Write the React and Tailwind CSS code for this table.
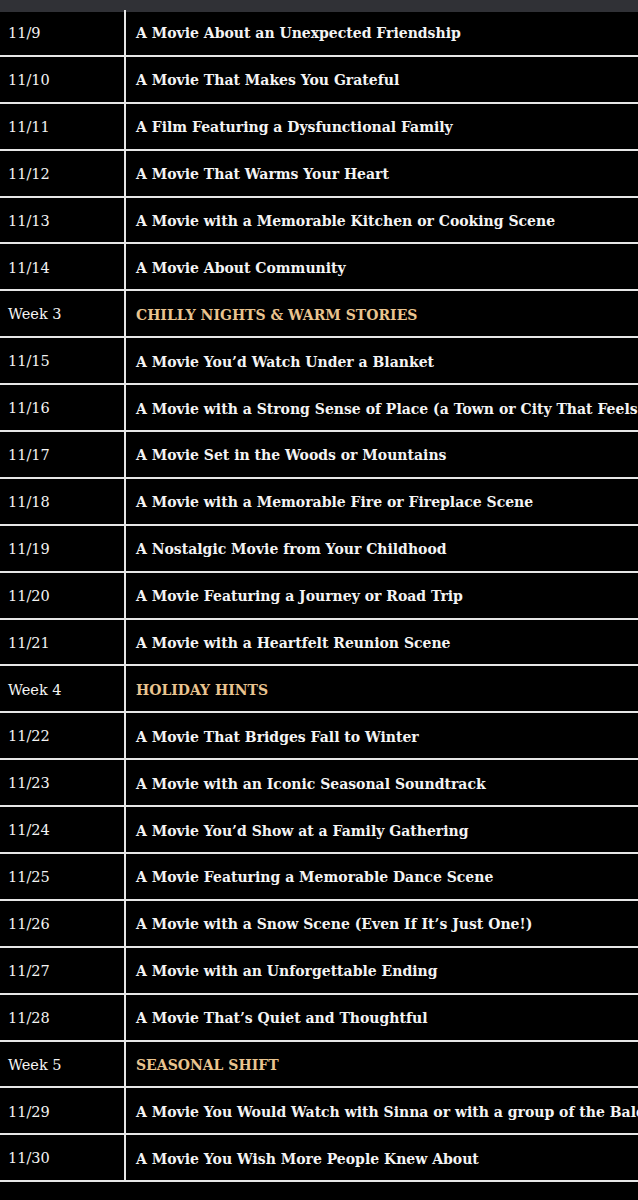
const rows = [
  ['11/9', 'A Movie About an Unexpected Friendship'],
  ['11/10', 'A Movie That Makes You Grateful'],
  ['11/11', 'A Film Featuring a Dysfunctional Family'],
  ['11/12', 'A Movie That Warms Your Heart'],
  ['11/13', 'A Movie with a Memorable Kitchen or Cooking Scene'],
  ['11/14', 'A Movie About Community'],
  ['Week 3', 'CHILLY NIGHTS & WARM STORIES', true],
  ['11/15', 'A Movie You’d Watch Under a Blanket'],
  ['11/16', 'A Movie with a Strong Sense of Place (a Town or City That Feels Like Home)'],
  ['11/17', 'A Movie Set in the Woods or Mountains'],
  ['11/18', 'A Movie with a Memorable Fire or Fireplace Scene'],
  ['11/19', 'A Nostalgic Movie from Your Childhood'],
  ['11/20', 'A Movie Featuring a Journey or Road Trip'],
  ['11/21', 'A Movie with a Heartfelt Reunion Scene'],
  ['Week 4', 'HOLIDAY HINTS', true],
  ['11/22', 'A Movie That Bridges Fall to Winter'],
  ['11/23', 'A Movie with an Iconic Seasonal Soundtrack'],
  ['11/24', 'A Movie You’d Show at a Family Gathering'],
  ['11/25', 'A Movie Featuring a Memorable Dance Scene'],
  ['11/26', 'A Movie with a Snow Scene (Even If It’s Just One!)'],
  ['11/27', 'A Movie with an Unforgettable Ending'],
  ['11/28', 'A Movie That’s Quiet and Thoughtful'],
  ['Week 5', 'SEASONAL SHIFT', true],
  ['11/29', 'A Movie You Would Watch with Sinna or with a group of the Baleful Club'],
  ['11/30', 'A Movie You Wish More People Knew About'],
];

export default function App() {
  return (
    <div className="w-[638px] h-[1200px] overflow-hidden bg-black text-[#f4f4f4] font-['DejaVu_Serif',serif]">
      <div className="h-[12px] bg-[#303136]" />
      <div className="-mt-[2px]">
        {rows.map(([day, title, week], i) => (
          <div key={i} className="flex h-[46.9px] border-b-2 border-[#e6e6e6] whitespace-nowrap pt-[3px]">
            <div className="w-[126px] shrink-0 -mt-[3px] border-r-2 border-[#e6e6e6] pt-[3px] pl-2 flex items-center text-[14.5px]">
              {day}
            </div>
            <div
              className={`pl-[10px] flex items-center text-[14px] font-bold ${week ? 'text-[#e9c48f]' : ''}`}
            >
              {title}
            </div>
          </div>
        ))}
      </div>
    </div>
  );
}
